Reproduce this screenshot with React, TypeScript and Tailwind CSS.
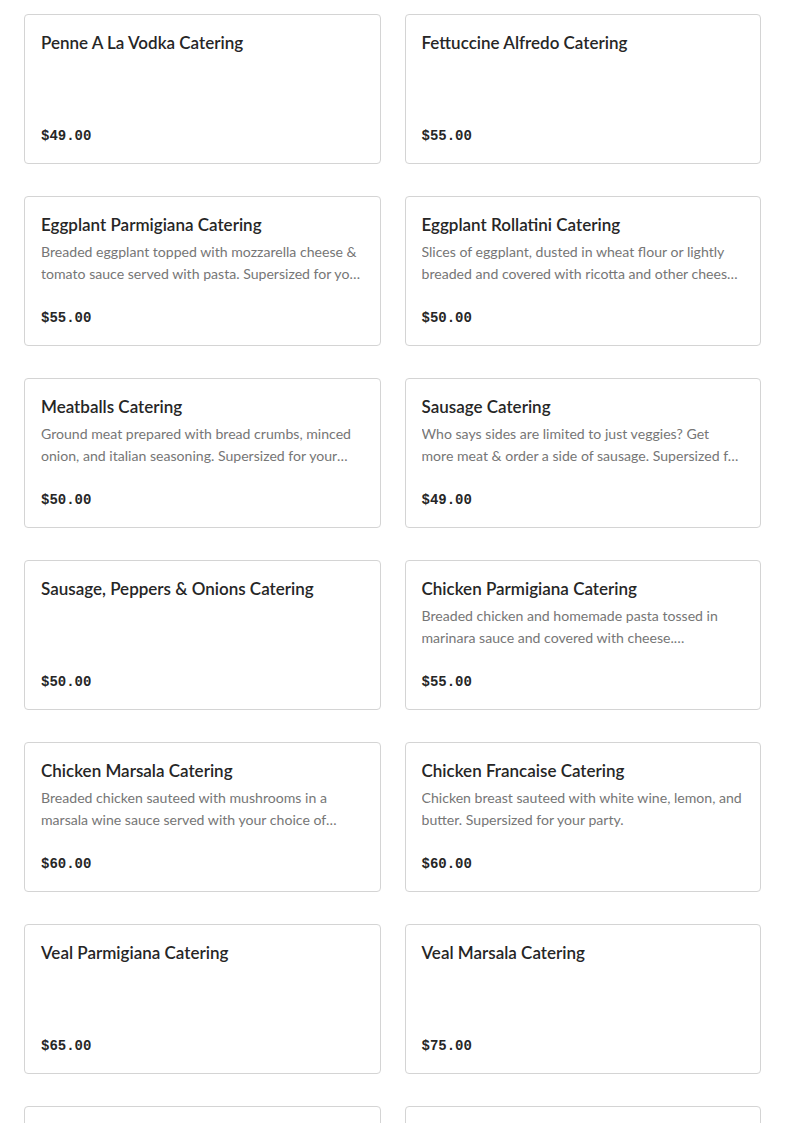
type Item = { name: string; desc?: string; price: string };

const items: Item[] = [
  { name: "Penne A La Vodka Catering", price: "$49.00" },
  { name: "Fettuccine Alfredo Catering", price: "$55.00" },
  {
    name: "Eggplant Parmigiana Catering",
    desc: "Breaded eggplant topped with mozzarella cheese & tomato sauce served with pasta. Supersized for your party.",
    price: "$55.00",
  },
  {
    name: "Eggplant Rollatini Catering",
    desc: "Slices of eggplant, dusted in wheat flour or lightly breaded and covered with ricotta and other cheeses. Supersized for your party.",
    price: "$50.00",
  },
  {
    name: "Meatballs Catering",
    desc: "Ground meat prepared with bread crumbs, minced onion, and italian seasoning. Supersized for your party.",
    price: "$50.00",
  },
  {
    name: "Sausage Catering",
    desc: "Who says sides are limited to just veggies? Get more meat & order a side of sausage. Supersized for your party.",
    price: "$49.00",
  },
  { name: "Sausage, Peppers & Onions Catering", price: "$50.00" },
  {
    name: "Chicken Parmigiana Catering",
    desc: "Breaded chicken and homemade pasta tossed in marinara sauce and covered with cheese. Supersized for your party.",
    price: "$55.00",
  },
  {
    name: "Chicken Marsala Catering",
    desc: "Breaded chicken sauteed with mushrooms in a marsala wine sauce served with your choice of pasta. Supersized for your party.",
    price: "$60.00",
  },
  {
    name: "Chicken Francaise Catering",
    desc: "Chicken breast sauteed with white wine, lemon, and butter. Supersized for your party.",
    price: "$60.00",
  },
  { name: "Veal Parmigiana Catering", price: "$65.00" },
  { name: "Veal Marsala Catering", price: "$75.00" },
  { name: "Shrimp Scampi Catering", price: "$80.00" },
  { name: "Shrimp Parmigiana Catering", price: "$80.00" },
];

const Card = ({ item }: { item: Item }) => (
  <div className="h-[150px] rounded-[4px] border border-[#d4d4d4] bg-white p-4 flex flex-col justify-between">
    <div className="flex flex-col gap-1">
      <p className="text-[17px] leading-6 font-semibold text-[#262626] font-['Lato',sans-serif]">
        {item.name}
      </p>
      {item.desc && (
        <p className="text-[14.1px] leading-[22px] text-[#767676] font-['Lato',sans-serif] line-clamp-2">
          {item.desc}
        </p>
      )}
    </div>
    <p className="text-[14px] leading-[22px] font-bold text-[#262626] font-['Liberation_Mono',monospace]">
      {item.price}
    </p>
  </div>
);

export default function App() {
  return (
    <div className="bg-white min-h-screen px-6 pt-[14px] pb-10">
      <div className="grid grid-cols-2 gap-x-6 gap-y-8">
        {items.map((item) => (
          <Card key={item.name} item={item} />
        ))}
      </div>
    </div>
  );
}
